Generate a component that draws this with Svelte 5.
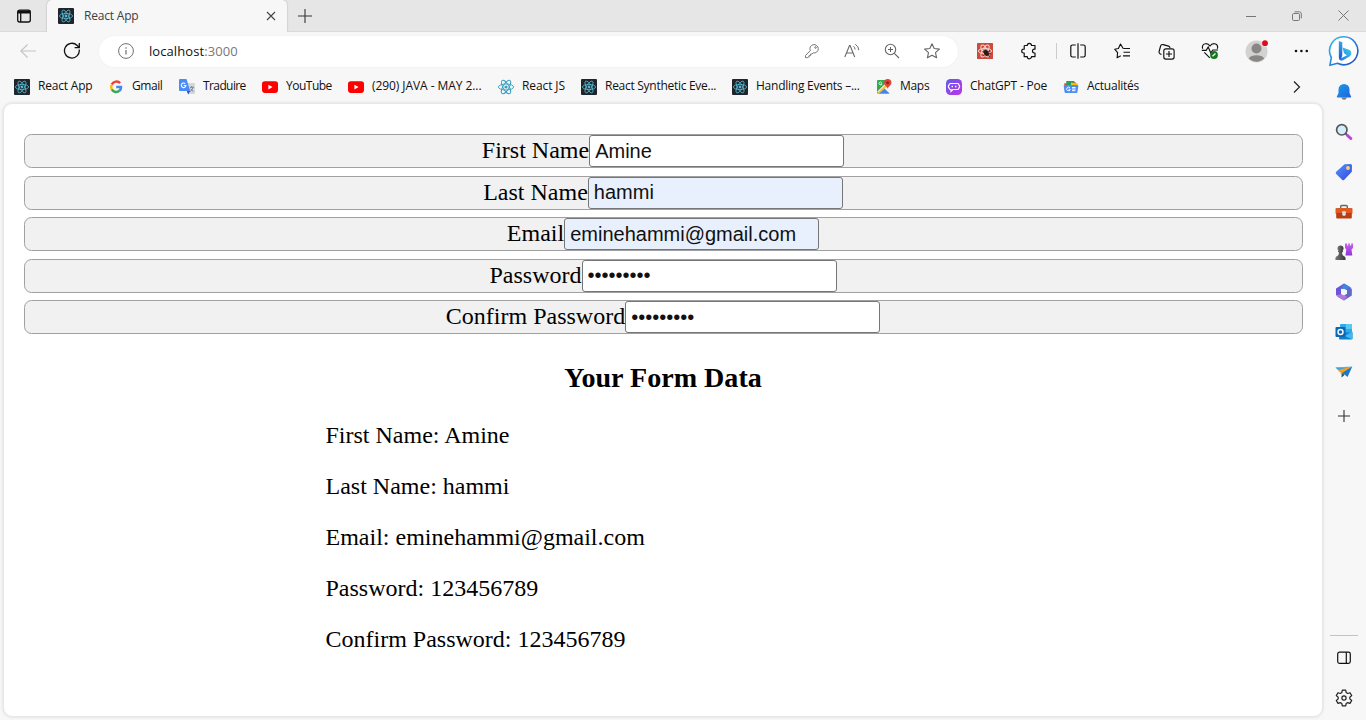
<script>
  const bookmarks = [
    { icon: 'react', label: 'React App', width: 94, spacing: -0.2 },
    { icon: 'google', label: 'Gmail', width: 71, spacing: -0.45 },
    { icon: 'translate', label: 'Traduire', width: 83, spacing: -0.6 },
    { icon: 'youtube', label: 'YouTube', width: 86, spacing: -0.5 },
    { icon: 'youtube', label: '(290) JAVA - MAY 2...', width: 150, spacing: -0.07 },
    { icon: 'reactlight', label: 'React JS', width: 83, spacing: -0.1 },
    { icon: 'react', label: 'React Synthetic Eve...', width: 151, spacing: -0.28 },
    { icon: 'react', label: 'Handling Events –...', width: 144, spacing: -0.25 },
    { icon: 'maps', label: 'Maps', width: 70, spacing: -0.3 },
    { icon: 'poe', label: 'ChatGPT - Poe', width: 117, spacing: -0.2 },
    { icon: 'news', label: 'Actualités', width: 110, spacing: -0.25 }
  ];

  const fields = [
    { label: 'First Name', value: 'Amine', type: 'text', filled: false },
    { label: 'Last Name', value: 'hammi', type: 'text', filled: true },
    { label: 'Email', value: 'eminehammi@gmail.com', type: 'text', filled: true },
    { label: 'Password', value: '123456789', type: 'password', filled: false },
    { label: 'Confirm Password', value: '123456789', type: 'password', filled: false }
  ];
</script>

{#snippet atom(color, sw)}
  <g fill="none" stroke={color} stroke-width={sw}>
    <ellipse cx="8" cy="8" rx="6.6" ry="2.6" />
    <ellipse cx="8" cy="8" rx="6.6" ry="2.6" transform="rotate(60 8 8)" />
    <ellipse cx="8" cy="8" rx="6.6" ry="2.6" transform="rotate(120 8 8)" />
  </g>
  <circle cx="8" cy="8" r="1.4" fill={color} />
{/snippet}

{#snippet favicon(name)}
  <svg width="16" height="16" viewBox="0 0 16 16">
    {#if name === 'react'}
      <rect width="16" height="16" rx="1" fill="#20242b" />
      {@render atom('#57b9d3', 0.8)}
    {:else if name === 'reactlight'}
      <g transform="translate(-1.2 -1.2) scale(1.15)">{@render atom('#3a9fc0', 0.8)}</g>
    {:else if name === 'google'}
      <g fill="none" stroke-width="2.5">
        <path d="M12.1 4.2A5 5 0 0 0 3.8 5.6" stroke="#ea4335" />
        <path d="M3.8 5.6a5 5 0 0 0 0 4.8" stroke="#fbbc05" />
        <path d="M3.8 10.4a5 5 0 0 0 7.6 1.4" stroke="#34a853" />
        <path d="M11.4 11.8A4.6 4.6 0 0 0 13 8H8.2" stroke="#4285f4" />
      </g>
    {:else if name === 'translate'}
      <path d="M6 4h9a1 1 0 0 1 1 1v9a1 1 0 0 1-1 1H9z" fill="#d4d7dc" />
      <path d="M11 8.300h4M12.700 7v1.300M14 8.500c-.5 1.800-1.400 3-2.800 4M11.600 9.800c.6 1.200 1.500 2 2.700 2.600" stroke="#7b8794" fill="none" />
      <path d="M1 0h6.500l3.700 12H1a1 1 0 0 1-1-1V1a1 1 0 0 1 1-1z" fill="#4c8bf5" />
      <path d="M7.800 12h3.400l-2 3.500z" fill="#2b50c8" />
      <path d="M6.300 4.700a2.300 2.300 0 1 0 .6 1.800H4.700" stroke="#fff" fill="none" stroke-width="1.100" />
    {:else if name === 'youtube'}
      <rect y="2.300" width="16" height="11.600" rx="2.800" fill="#f00" />
      <path d="M6.400 5.700v4.800L10.500 8.100z" fill="#fff" />
    {:else if name === 'maps'}
      <path d="M2 1h11v13.500H2a1 1 0 0 1-1-1V2a1 1 0 0 1 1-1z" fill="#34a853" />
      <path d="M1 12.800 11 3l3 4v7z" fill="#f4f4f4" />
      <path d="m2 14.500 5.800-5.800 5.700 5.800z" fill="#4285f4" />
      <path d="M9.500 6 1 14l1.800.7L11 7.500z" fill="#fbc02d" />
      <path d="M5.700 3.500a1.500 1.500 0 1 0 .3 1.400H4.600" stroke="#fff" stroke-width=".8" fill="none" />
      <path d="M11.700 0a3.700 3.700 0 0 1 3.700 3.700c0 2.600-2.700 3.300-3.700 6-1-2.700-3.700-3.400-3.700-6A3.700 3.700 0 0 1 11.700 0z" fill="#e04336" />
      <circle cx="11.700" cy="3.700" r="1.300" fill="#7b1b15" />
    {:else if name === 'poe'}
      <rect width="16" height="16" rx="4.500" fill="url(#poeGrad)" />
      <path d="M4.500 4.500h7a1.500 1.500 0 0 1 1.400 1.500 1.900 1.900 0 0 1 0 3 1.500 1.500 0 0 1-1.400 1.500H7l-2 1.800v-1.800h-.5A1.500 1.500 0 0 1 3.100 9a1.900 1.900 0 0 1 0-3 1.500 1.500 0 0 1 1.400-1.500z" fill="none" stroke="#fff" stroke-width="1.200" />
      <path d="M6.300 6.800v1.400M9.700 6.800v1.400" stroke="#fff" stroke-width="1.400" />
    {:else}
      <path d="M1 4.500 12.500 3v5H2z" fill="#ea4335" />
      <path d="M3.300 2h8v5h-8z" fill="#25a05a" />
      <path d="m8 3.600 6.800.9-.5 5H8z" fill="#fbbc05" />
      <path d="M1.500 6h13a.8.8 0 0 1 .8.900l-.9 6.300a1 1 0 0 1-1 .8H2.600a1 1 0 0 1-1-.8L.7 6.900A.8.8 0 0 1 1.500 6z" fill="#4f8df5" />
      <path d="M6.900 8.800a1.800 1.800 0 1 0 .4 1.500H5.600M9 8.500h3.500M9 10h3.500M9 11.700h3.500" stroke="#fff" fill="none" />
    {/if}
  </svg>
{/snippet}

<svg class="defs" width="0" height="0">
  <defs>
    <linearGradient id="poeGrad" x1="0" y1="0" x2="1" y2="1"><stop stop-color="#5d5ce5" /><stop offset="1" stop-color="#c430e8" /></linearGradient>
    <linearGradient id="bingStem" x1="0" y1="0" x2="0" y2="1"><stop stop-color="#37a6ee" /><stop offset="1" stop-color="#1a55d6" /></linearGradient>
    <linearGradient id="bingBowl" x1="0" y1="1" x2="1" y2="0"><stop stop-color="#2570e4" /><stop offset="1" stop-color="#3ed3e2" /></linearGradient>
    <linearGradient id="ringGrad" x1="0" y1="0" x2="1" y2="1"><stop stop-color="#35c2ee" /><stop offset="1" stop-color="#1c45c0" /></linearGradient>
    <linearGradient id="bellGrad" x1="0" y1="0" x2="1" y2="1"><stop stop-color="#159ce6" /><stop offset="1" stop-color="#2463df" /></linearGradient>
    <linearGradient id="tagGrad" x1="0" y1="0" x2="1" y2="1"><stop stop-color="#5693ff" /><stop offset="1" stop-color="#3447db" /></linearGradient>
    <linearGradient id="rookGrad" x1="0" y1="0" x2="0" y2="1"><stop stop-color="#d05cf5" /><stop offset="1" stop-color="#8c38d6" /></linearGradient>
    <linearGradient id="pawnGrad" x1="0" y1="0" x2="1" y2="0"><stop stop-color="#777" /><stop offset="1" stop-color="#383838" /></linearGradient>
  </defs>
</svg>

<div class="browser">
  <header class="tabs">
    <div class="workspace">
      <svg width="16" height="16" viewBox="0 0 16 16" fill="none" stroke="#111" stroke-width="1.300"><rect x="1.700" y="2.200" width="12.600" height="11.800" rx="2" /><path d="M1.700 4h12.600" stroke-width="3" /><path d="M4.700 5v9" /></svg>
    </div>
    <div class="tab">
      {@render favicon('react')}
      <span>React App</span>
      <svg class="close" width="10" height="10" viewBox="0 0 10 10" stroke="#444" stroke-width="1.100"><path d="m1 1 8 8M9 1 1 9" /></svg>
    </div>
    <svg class="newtab" width="14" height="14" viewBox="0 0 14 14" stroke="#333" stroke-width="1.100"><path d="M7 0v14M0 7h14" /></svg>
    <div class="window">
      <svg width="10" height="10" viewBox="0 0 10 10" stroke="#777"><path d="M0 5.500h10" /></svg>
      <svg width="10" height="10" viewBox="0 0 10 10" stroke="#777" fill="none"><rect x=".5" y="2.500" width="7" height="7" rx="1.200" /><path d="M2.500.8h4.800a2 2 0 0 1 2 2v4.600" /></svg>
      <svg width="11" height="11" viewBox="0 0 11 11" stroke="#777"><path d="m.5.500 10 10M10.500.5l-10 10" /></svg>
    </div>
  </header>

  <div class="body">
    <div class="main">
      <div class="toolbar">
        <div class="slot"><svg width="16" height="16" viewBox="0 0 16 16" stroke="#c3c3c3" fill="none" stroke-width="1.100"><path d="M16 8H.8M7.600 1.500.8 8l6.800 6.500" /></svg></div>
        <div class="slot"><svg width="18" height="18" viewBox="0 0 18 18" stroke="#111" fill="none" stroke-width="1.300"><path d="M16.200 7.500a7.400 7.400 0 1 1-2-4L16.300 5.600M16.300 1v4.700h-4.700" /></svg></div>
        <div class="url">
          <svg width="16" height="16" viewBox="0 0 16 16" fill="none" stroke="#707070"><circle cx="8" cy="8" r="7.400" /><path d="M8 7v4.500M8 4.300v1.400" stroke-width="1.200" /></svg>
          <span class="address">localhost<i>:3000</i></span>
          <div class="actions">
            <svg width="16" height="16" viewBox="0 0 16 16" fill="none" stroke="#777"><path d="M6.300 7.600A4.200 4.200 0 1 1 9.200 9.900L8 11H6.600v1.500H5.200V14H4l-.7.700H1.500v-2.200z" stroke-linejoin="round" /><circle cx="11.500" cy="4.500" r=".8" /></svg>
            <svg width="16" height="16" viewBox="0 0 16 16" fill="none" stroke="#6a6a6a"><path d="M.8 14 5.500 2.500h.6L10.700 14M2.500 10h6.600" stroke-width="1.100" /><path d="M9.500 3.200a4.500 4.500 0 0 1 1.600 3.300M11.300 1.200a7.500 7.500 0 0 1 3.500 6" /></svg>
            <svg width="16" height="16" viewBox="0 0 16 16" fill="none" stroke="#666"><circle cx="6.500" cy="6.500" r="5.200" stroke-width="1.100" /><path d="m10.300 10.300 4.700 4.700M6.500 4v5M4 6.500h5" stroke-width="1.100" /></svg>
            <svg width="16" height="18" viewBox="1 0 16 18" fill="none" stroke="#666" stroke-width="1.100" stroke-linejoin="round"><path d="m9 1.700 2.200 4.800 5.200.6-3.900 3.500 1.100 5.200L9 13.200l-4.600 2.600 1.100-5.200-3.900-3.500 5.200-.6z" /></svg>
          </div>
        </div>
        <div class="slot"><svg width="16" height="16" viewBox="0 0 16 16"><rect width="16" height="16" rx=".5" fill="#cb4b3f" />{@render atom('#f6d5d0', 1)}<ellipse cx="9.300" cy="10" rx="2.400" ry="3.200" fill="#321610" transform="rotate(-30 9 10)" /><path d="m5.500 8.500 2 1m-1 3 2-1m4.500-4-2 1.500m3 1-2 1m1 2.500-2-1" stroke="#321610" stroke-width=".8" /></svg></div>
        <div class="slot"><svg width="18" height="18" viewBox="0 0 18 18" fill="none" stroke="#111" stroke-width="1.200" stroke-linejoin="round"><path d="M5 3.500h2.300a2.100 2.100 0 0 1 4.200 0H15v3.700h-.6a1.900 1.900 0 0 0 0 3.800h.6v3.700h-3.500a2.100 2.100 0 0 1-4.200 0H4.200V11h-.6a1.900 1.900 0 0 1 0-3.800h.6V4.300a.8.800 0 0 1 .8-.8z" /></svg></div>
        <div class="divider"></div>
        <div class="slot"><svg width="16" height="16" viewBox="0 0 16 16" fill="none" stroke="#111" stroke-width="1.200"><path d="M5.800 2H2.500A1.700 1.700 0 0 0 .8 3.700v8.600A1.700 1.700 0 0 0 2.500 14h3.300M10.200 2h3.300a1.700 1.700 0 0 1 1.700 1.700v8.600a1.700 1.700 0 0 1-1.700 1.700h-3.300M8 .2v15.600" /></svg></div>
        <div class="slot"><svg width="17" height="17" viewBox="0 0 17 17" fill="none" stroke="#111" stroke-width="1.150" stroke-linejoin="round"><path d="M10.800 5.500 9 5.200 6.500 1 4.400 5.500.7 6.200l2.900 3.500-.5 5 3.700-2M10.500 5.500H16M9.500 9.200H16M9 12.800h7" /></svg></div>
        <div class="slot nudge"><svg width="17" height="17" viewBox="0 0 17 17" fill="none" stroke="#111" stroke-width="1.150"><path d="M3.500 11.500 2 10.700a2 2 0 0 1-.9-2.200L2.600 3a2 2 0 0 1 2.500-1.400l5.500 1.500A2 2 0 0 1 12 5" /><rect x="5.800" y="5.800" width="10.300" height="10.300" rx="2" /><path d="M11 8v6M8 11h6" /></svg></div>
        <div class="slot nudge"><svg width="18" height="18" viewBox="0 0 18 18" fill="none" stroke="#111" stroke-width="1.150"><path d="M1.700 6.800C.6 4 2.200 1.800 4.700 1.700 6.700 1.600 8 2.500 9 4c1-1.500 2.500-2.500 4.500-2.300 2.500.2 3.900 2.500 2.800 5.100M3.300 10.300l5.500 5.500M.8 8.300h4.400l2-3.300 2.600 6 2-3H17" /><circle cx="13" cy="13" r="3.900" fill="#14791e" stroke="none" /><path d="m11.500 14.200 3-2.600" stroke="#fff" stroke-width="1.300" /></svg></div>
        <div class="slot"><svg width="23" height="23" viewBox="0 0 23 23"><circle cx="11.500" cy="11.500" r="11" fill="#d4d2d0" /><circle cx="11.500" cy="8.500" r="5" fill="#898785" /><path d="M3.800 18.500c2-4.300 13.400-4.300 15.400 0a11 11 0 0 1-15.400 0z" fill="#898785" /><circle cx="20" cy="3.200" r="3.400" fill="#f7f7f7" /><circle cx="20" cy="3.200" r="2.900" fill="#e00b1c" /></svg></div>
        <div class="slot"><svg width="16" height="4" viewBox="0 0 16 4" fill="#111"><circle cx="3" cy="2" r="1.300" /><circle cx="8.400" cy="2" r="1.300" /><circle cx="13.800" cy="2" r="1.300" /></svg></div>
      </div>

      <nav class="bookmarks">
        {#each bookmarks as b}
          <div class="bookmark" style="width: {b.width}px; letter-spacing: {b.spacing}px">
            {@render favicon(b.icon)}
            <span>{b.label}</span>
          </div>
        {/each}
        <svg class="more" width="8" height="12" viewBox="0 0 8 12" fill="none" stroke="#222" stroke-width="1.200"><path d="m1 .5 5.500 5.500L1 11.500" /></svg>
      </nav>

      <main class="page">
        <form>
          {#each fields as f}
            <div class="field">
              <label for={f.label}>{f.label}</label>
              <input id={f.label} class:filled={f.filled} type={f.type} value={f.value} />
            </div>
          {/each}
        </form>
        <h3>Your Form Data</h3>
        <div class="data">
          {#each fields as f}
            <p>{f.label}: {f.value}</p>
          {/each}
        </div>
      </main>
    </div>

    <aside>
      <div class="bing"><svg width="32" height="32" viewBox="0 0 32 32"><path d="M16 1.800a14 14 0 1 1-6.500 26.500L2 30.200l1.300-7.700A14 14 0 0 1 16 1.800z" fill="#fff" stroke="url(#ringGrad)" stroke-width="1.600" /><path d="m14.500 12.500 6.500 2.300c3 1.200 3.200 5 .5 6.700l-6.500 3.700c-1.500.8-3 .3-4-1l8-4-1.700-1-1.300-1.300z" fill="url(#bingBowl)" /><path d="m10.800 6 3.500 1.300v12.200c0 1.500-.5 2.500-1 3.500l-1 1.800a3 3 0 0 1-1.500-2.600z" fill="url(#bingStem)" /></svg></div>
      <div class="app"><svg width="16" height="18" viewBox="0 0 16 18"><path d="M5.500 14.500h5.200c-.3 3-4.900 3-5.200 0z" fill="#777" /><path d="M8 1a5.500 5.500 0 0 1 5.500 5.500V10l1.600 3.500a.7.700 0 0 1-.7 1H1.600a.7.700 0 0 1-.7-1L2.500 10V6.500A5.500 5.500 0 0 1 8 1z" fill="url(#bellGrad)" /></svg></div>
      <div class="app"><svg width="18" height="18" viewBox="0 0 18 18"><path d="m10 10 3 3" stroke="#555" stroke-width="2" /><path d="m12.500 12.500 3.300 3" stroke="#c13fe0" stroke-width="3" stroke-linecap="round" /><circle cx="6.800" cy="6.800" r="5.200" fill="#d5edfb" stroke="#58585b" stroke-width="1.700" /></svg></div>
      <div class="app"><svg width="18" height="18" viewBox="0 0 18 18"><path d="m9.500 1.200 6-.2A1.500 1.500 0 0 1 17 2.500l-.2 6.200-7.500 8a1.600 1.600 0 0 1-2.200 0L1.200 11a1.600 1.600 0 0 1 0-2.200z" fill="url(#tagGrad)" /><circle cx="13" cy="5" r="1.900" fill="#ffd65b" /></svg></div>
      <div class="app"><svg width="18" height="16" viewBox="0 0 18 16"><path d="M5.700 4V2.500A1 1 0 0 1 6.700 1.500h4.600a1 1 0 0 1 1 1V4" fill="none" stroke="#666" stroke-width="1.400" /><rect x=".5" y="4" width="17" height="6" rx="1" fill="#df5b24" /><path d="M1.200 9h15.600v4.500a1 1 0 0 1-1 1H2.200a1 1 0 0 1-1-1z" fill="#b73d12" /><path d="M7.200 7.200h3.600v3a1.800 1.800 0 0 1-3.600 0z" fill="#ddd" /></svg></div>
      <div class="app"><svg width="18" height="18" viewBox="0 0 18 18"><path d="M10 .5h2v2h1.200v-2h1.800v2h1.200v-2H18V5l-1.500 1.500.8 6H10.500l.8-6L10 5z" fill="url(#rookGrad)" /><circle cx="5.500" cy="5.500" r="3" fill="url(#pawnGrad)" /><path d="M3 8h5v1.200H7c0 2.500.8 3.500 2.600 4.300.8.400 1 1.200 1 3.500H.4c0-2.300.2-3.100 1-3.500C3.200 12.700 4 11.700 4 9.200H3z" fill="url(#pawnGrad)" /></svg></div>
      <div class="app"><svg width="18" height="18" viewBox="0 0 18 18"><path d="M9 .5 15 4v0L9.500 3.700 6 6v7L1 12.200V5.500z" fill="#6b55d8" /><path d="m9 .5 7.200 4.200V12L12 14V7.300L6 5.700z" fill="#3c87df" /><path d="M16.800 6v6.500L9 17.500l-7.200-4.200 4.700-.5 6-3.500V4z" fill="#6168cb" /><path d="M1.200 12.500 6.500 11 12 13.500 9 17.500z" fill="#b276dc" /><path d="m9 5.700 3 1.700v3.400l-3 1.700-3-1.700V7.400z" fill="#f7f7f7" /></svg></div>
      <div class="app"><svg width="18" height="18" viewBox="0 0 18 18"><rect x="5" y="1" width="12" height="10" rx="1" fill="#32a9e7" /><path d="M11 1h6v5h-6z" fill="#54caf4" /><path d="M4 9.500h13.500v6a1 1 0 0 1-1 1H5a1 1 0 0 1-1-1z" fill="#147fc9" /><path d="m17.500 8.500-8 4.500 7.500 3.300a1 1 0 0 0 .5-.8z" fill="#3fb9ef" /><rect x=".5" y="4" width="10" height="10" rx="1" fill="#0868b8" /><circle cx="5.500" cy="9" r="2.500" fill="none" stroke="#fff" stroke-width="1.400" /></svg></div>
      <div class="app"><svg width="18" height="18" viewBox="0 0 18 18"><path d="m.5 4.500 16.500-1-10 6z" fill="#49b8e8" /><path d="m.5 4.500 5 4.700L14 5z" fill="#4a9fd8" /><path d="M17.300 3.500 3 7l2.500 2.500 1 5z" fill="#f3a11c" /><path d="m17.300 3.500-9.800 6.300L12.500 14z" fill="#1976d2" /><path d="m7.500 9.800-1 4.700 3-2.500z" fill="#16569c" /></svg></div>
      <div class="app plus"><svg width="12" height="12" viewBox="0 0 12 12" stroke="#333" stroke-width="1.100"><path d="M6 0v12M0 6h12" /></svg></div>
      <div class="bottom">
        <div class="app"><svg width="14" height="14" viewBox="0 0 14 14" fill="none" stroke="#111" stroke-width="1.200"><rect x=".7" y="1.200" width="12.600" height="11.200" rx="1.800" /><path d="M9.300 1.200v11.200" /></svg></div>
        <div class="app"><svg width="18" height="18" viewBox="0 0 18 18" fill="none" stroke="#222" stroke-width="1.200" stroke-linejoin="round"><path d="m7.300 1.200-.5 2.400-1.500.9L3 3.700 1.300 6.600 3.200 8.200v1.700l-1.900 1.600L3 14.400l2.300-.8 1.500.9.500 2.300h3.400l.5-2.300 1.500-.9 2.300.8 1.700-2.900-1.900-1.600V8.200l1.900-1.600L15 3.700l-2.300.8-1.500-.9-.5-2.400z" /><circle cx="9" cy="9" r="2.100" /></svg></div>
      </div>
    </aside>
  </div>
</div>

<style>
  :global(body) { margin: 0; overflow: hidden; }
  svg { display: block; flex: none; }
  .defs { position: absolute; }
  .browser {
    display: flex;
    flex-direction: column;
    width: 1366px;
    height: 720px;
    background: #f7f7f7;
    font: 12px/16px "Open Sans", sans-serif;
    color: #1b1b1b;
  }
  .tabs {
    display: flex;
    align-items: center;
    box-sizing: border-box;
    height: 32px;
    background: #e6e6e6;
    border-bottom: 1px solid #dadada;
  }
  .workspace { width: 31px; padding-left: 16px; }
  .tab {
    display: flex;
    align-items: center;
    box-sizing: border-box;
    width: 240px;
    height: 32px;
    margin-top: 1px;
    padding: 0 11px;
    border-radius: 5px 5px 0 0;
    background: #f7f7f7;
    box-shadow: 0 0 2px #0004;
    clip-path: inset(-3px -3px 0 -3px);
    color: #404040;
    letter-spacing: -0.2px;
  }
  .tab span { margin-left: 10px; }
  .close { margin-left: auto; }
  .newtab { margin-left: 11px; }
  .window { display: flex; align-items: center; gap: 36px; margin-left: auto; padding-right: 17px; }
  .body { display: flex; flex: 1; min-height: 0; }
  .main { display: flex; flex-direction: column; width: 1323px; }
  .toolbar {
    display: grid;
    grid-template-columns: 44px 44px 859px 44px 44px 5px 44px 45px 44px 44px 46px 44px;
    padding-left: 6px;
    height: 38px;
    align-items: center;
  }
  .slot { display: flex; justify-content: center; }
  .url {
    display: flex;
    align-items: center;
    box-sizing: border-box;
    height: 31px;
    margin-left: 5px;
    margin-right: -5px;
    padding: 0 18px 0 19px;
    border-radius: 16px;
    background: #fff;
    box-shadow: 0 0 2px #0001;
  }
  .address { margin-left: 15px; font-size: 13px; letter-spacing: 0.08px; color: #111; }
  .address i { font-style: normal; color: #777; }
  .actions { display: flex; align-items: center; gap: 24px; margin-left: auto; }
  .toolbar .slot:nth-child(n + 4) { padding-left: 10px; margin-right: -10px; }
  .toolbar .nudge:nth-child(n + 4) { padding-left: 8px; }
  .divider { width: 1px; height: 16px; margin-left: 15px; background: #ccc; }
  .bookmarks { display: flex; align-items: center; height: 33px; padding-left: 14px; color: #111; }
  .bookmark { display: flex; align-items: center; gap: 8px; white-space: nowrap; }
  .bookmark span { padding-bottom: 2px; }
  .more { margin-left: 120px; }
  .page {
    flex: 1;
    margin: 0 0 3px 3px;
    box-sizing: border-box;
    border: 1px solid #e8e8e8;
    border-radius: 9px;
    padding: 30px 19px 0 20px;
    background: #fff;
    box-shadow: 0 0 3px #0002;
    font: 24px/27px "Liberation Serif", serif;
    color: #000;
  }
  form { display: flex; flex-direction: column; gap: 7.5px; }
  .field {
    display: flex;
    justify-content: center;
    box-sizing: border-box;
    height: 34px;
    padding-right: 1px;
    border: 1px solid #a0a0a0;
    border-radius: 7.5px;
    background: #f1f1f1;
    line-height: 30px;
  }
  input {
    box-sizing: border-box;
    width: 255px;
    height: 32px;
    margin: 0;
    padding: 1px 5px;
    border: 1px solid #767676;
    border-radius: 3px;
    outline: 0;
    background: #fff;
    color: #111;
    font: 20px "Liberation Sans", sans-serif;
  }
  input.filled { background: #e8f0fe; }
  h3 { margin: 28px 1px 28px 0; font-size: 28.08px; line-height: 32px; text-align: center; }
  .data { padding-left: 301.5px; }
  p { margin: 0 0 24px; }
  aside { display: flex; flex-direction: column; align-items: center; width: 41px; }
  .bing { height: 40px; padding-top: 3px; box-sizing: border-box; }
  .app { display: flex; align-items: center; justify-content: center; width: 28px; height: 40px; }
  .plus { margin-top: 4px; }
  .bottom { margin-top: auto; padding: 2px 0; border-top: 1px solid #c4c4c4; }
</style>
